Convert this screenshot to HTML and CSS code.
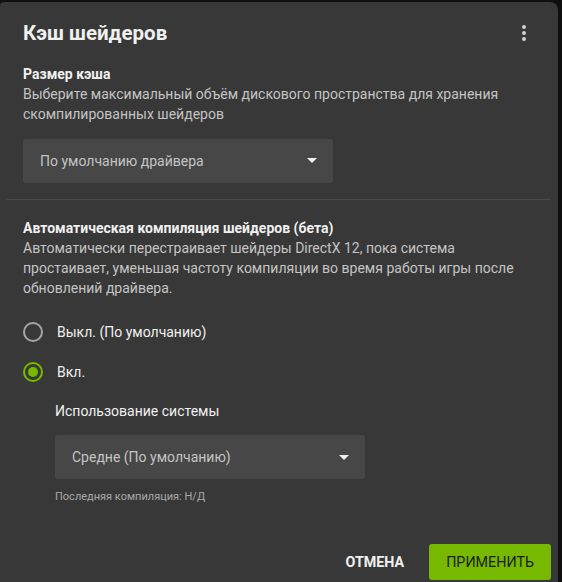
FILE: index.html
```html
<!DOCTYPE html>
<html lang="ru">
<head>
  <meta charset="UTF-8">
  <meta name="viewport" content="width=device-width, initial-scale=1.0">
  <title>Кэш шейдеров</title>
  <link rel="stylesheet" href="styles.css">
</head>
<body>

  <div class="dialog">
    <div class="dialog-header">
      <h1 class="dialog-title">Кэш шейдеров</h1>
      <button class="kebab" aria-label="Меню">
        <svg width="6" height="18" viewBox="0 0 6 18">
          <circle cx="3" cy="3" r="2" fill="#d0d0d0"/>
          <circle cx="3" cy="9" r="2" fill="#d0d0d0"/>
          <circle cx="3" cy="15" r="2" fill="#d0d0d0"/>
        </svg>
      </button>
    </div>

    <div class="section">
      <div class="section-title">Размер кэша</div>
      <p class="section-text">Выберите максимальный объём дискового пространства для хранения скомпилированных шейдеров</p>
      <div class="select">
        <span>По умолчанию драйвера</span>
        <span class="caret"></span>
      </div>
    </div>

    <div class="divider"></div>

    <div class="section">
      <div class="section-title">Автоматическая компиляция шейдеров (бета)</div>
      <p class="section-text">Автоматически перестраивает шейдеры DirectX 12, пока система простаивает, уменьшая частоту компиляции во время работы игры после обновлений драйвера.</p>

      <div class="radio-group">
        <label class="radio">
          <span class="radio-mark"></span>
          <span>Выкл. (По умолчанию)</span>
        </label>
        <label class="radio checked">
          <span class="radio-mark"></span>
          <span>Вкл.</span>
        </label>
      </div>

      <div class="sub-options">
        <div class="sub-title">Использование системы</div>
        <div class="select">
          <span>Средне (По умолчанию)</span>
          <span class="caret"></span>
        </div>
        <div class="hint">Последняя компиляция: Н/Д</div>
      </div>
    </div>

    <div class="dialog-actions">
      <button class="btn btn-text">ОТМЕНА</button>
      <button class="btn btn-primary">ПРИМЕНИТЬ</button>
    </div>
  </div>

</body>
</html>
```

FILE: styles.css
```css
:root {
  --page-bg: #0f0f0f;
  --dialog-bg: #383838;
  --field-bg: #474747;
  --divider: #4b4b4b;
  --text: #f0f0f0;
  --text-soft: #c4c4c4;
  --text-muted: #a8a8a8;
  --green: #76b900;
}

body {
  margin: 0;
  padding: 2px 4px 0 0;
  font-family: Roboto, "Noto Sans", sans-serif;
  background-color: var(--page-bg);
  color: var(--text);
  height: 580px;
  overflow: hidden;
}

.dialog {
  background-color: var(--dialog-bg);
  border-radius: 4px 8px 0 0;
  height: 600px;
}

.dialog-header {
  display: flex;
  justify-content: space-between;
  align-items: center;
  padding: 18px 31px 0 23px;
  height: 26px;
}

.dialog-title {
  margin: 0;
  font-size: 20.5px;
  font-weight: 700;
  color: var(--text);
}

.kebab {
  background: none;
  border: none;
  padding: 0;
  display: flex;
  cursor: pointer;
}

.section {
  padding: 0 23px;
}

.section-title {
  font-size: 14px;
  font-weight: 700;
  color: var(--text);
  line-height: 20px;
  margin-top: 18px;
}

.section-text {
  margin: 0;
  font-size: 14px;
  line-height: 20.3px;
  color: var(--text-soft);
}

.select {
  display: flex;
  justify-content: space-between;
  align-items: center;
  width: 310px;
  height: 44px;
  box-sizing: border-box;
  padding: 0 16px 0 17px;
  margin-top: 14px;
  background-color: var(--field-bg);
  border-radius: 3px;
  font-size: 14px;
  color: var(--text-soft);
}

.caret {
  width: 0;
  height: 0;
  border-left: 5px solid transparent;
  border-right: 5px solid transparent;
  border-top: 5px solid #f0f0f0;
}

.divider {
  height: 1px;
  background-color: var(--divider);
  margin: 16px 7px 0 7px;
}

.radio-group {
  display: flex;
  flex-direction: column;
  gap: 18px;
  margin-top: 23px;
}

.radio {
  display: flex;
  align-items: center;
  gap: 14px;
  font-size: 14px;
  color: var(--text);
  height: 22px;
}

.radio-mark {
  width: 20px;
  height: 20px;
  box-sizing: border-box;
  border: 2px solid #a6a6a6;
  border-radius: 50%;
  position: relative;
}

.radio.checked .radio-mark {
  border-color: var(--green);
}

.radio.checked .radio-mark::after {
  content: '';
  position: absolute;
  top: 3px;
  left: 3px;
  width: 10px;
  height: 10px;
  border-radius: 50%;
  background-color: var(--green);
}

.sub-options {
  padding-left: 32px;
}

.sub-title {
  font-size: 14px;
  color: var(--text);
  margin-top: 18px;
  line-height: 20px;
}

.sub-options .select {
  margin-top: 14px;
}

.hint {
  font-size: 11px;
  color: var(--text-muted);
  margin-top: 11px;
}

.dialog-actions {
  display: flex;
  justify-content: flex-end;
  align-items: center;
  gap: 25px;
  padding: 0 7px 0 0;
  margin-top: 41px;
}

.btn {
  font-family: inherit;
  font-size: 14.3px;
  border: none;
  cursor: pointer;
}

.btn-text {
  background: none;
  color: var(--text);
  font-weight: 700;
  padding: 0;
}

.btn-primary {
  background-color: var(--green);
  color: #1c1c1c;
  height: 36px;
  padding: 0 17px;
  border-radius: 3px;
}
```
